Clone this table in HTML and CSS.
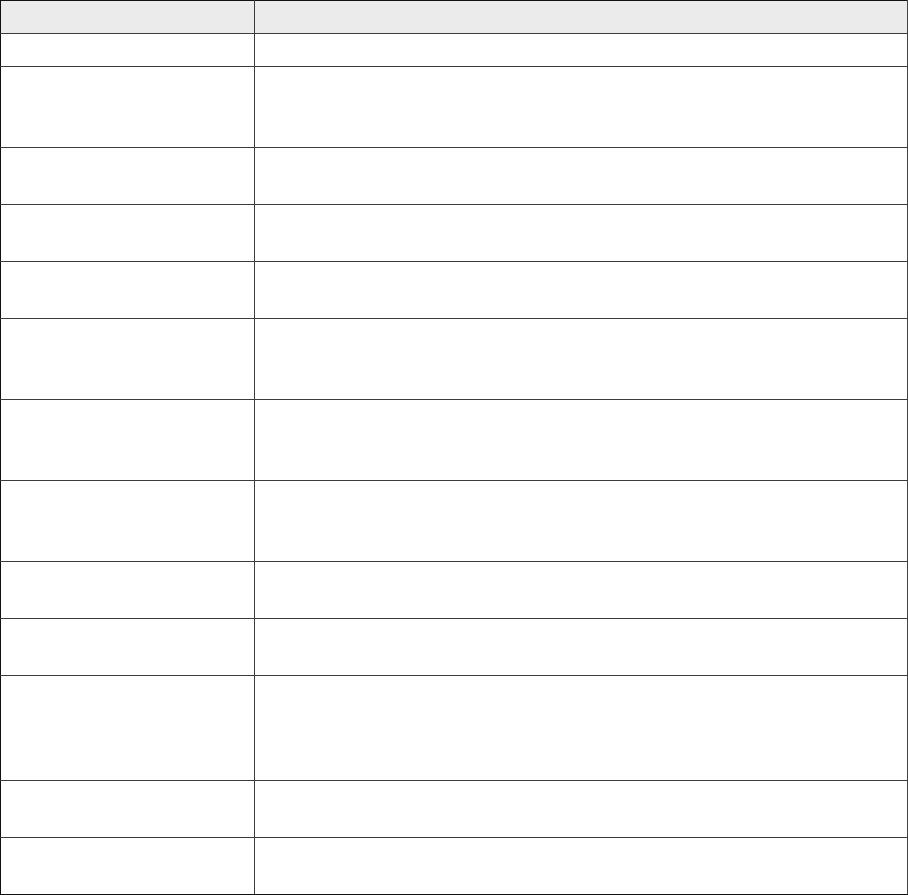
FILE: index.html
```html
<!DOCTYPE html>
<html>
<head>
<meta charset="utf-8">
<link rel="stylesheet" href="styles.css">
</head>
<body>
<table class="grid">
  <colgroup><col class="c1"><col class="c2"></colgroup>
  <thead>
    <tr class="l1"><th></th><th></th></tr>
  </thead>
  <tbody>
    <tr class="l1"><td></td><td></td></tr>
    <tr class="l3"><td></td><td></td></tr>
    <tr class="l2"><td></td><td></td></tr>
    <tr class="l2"><td></td><td></td></tr>
    <tr class="l2"><td></td><td></td></tr>
    <tr class="l3"><td></td><td></td></tr>
    <tr class="l3"><td></td><td></td></tr>
    <tr class="l3"><td></td><td></td></tr>
    <tr class="l2"><td></td><td></td></tr>
    <tr class="l2"><td></td><td></td></tr>
    <tr class="l4"><td></td><td></td></tr>
    <tr class="l2"><td></td><td></td></tr>
    <tr class="l2"><td></td><td></td></tr>
  </tbody>
</table>
</body>
</html>
```

FILE: styles.css
```css
html, body {
  margin: 0;
  padding: 0;
  background: #fff;
  font-family: "Liberation Sans", Arial, sans-serif;
  font-size: 14px;
}
.grid {
  border-collapse: collapse;
  table-layout: fixed;
  width: 908px;
}
.c1 { width: 254px; }
.grid th,
.grid td {
  border: 1px solid #3c3c3c;
  padding: 4px 8px;
  line-height: 24px;
  text-align: left;
  box-sizing: content-box;
}
.grid th {
  background: #ebebeb;
}
.grid tr > :first-child { border-left-color: #111; }
.grid tr > :last-child { border-right-color: #444; }
.grid thead tr > * { border-top-color: #111; }
.grid tbody tr:last-child > * { border-bottom-color: #111; }
.l1 > * { height: 24px; }
.l2 > * { height: 48px; }
.l3 > * { height: 72px; }
.l4 > * { height: 96px; }
```
